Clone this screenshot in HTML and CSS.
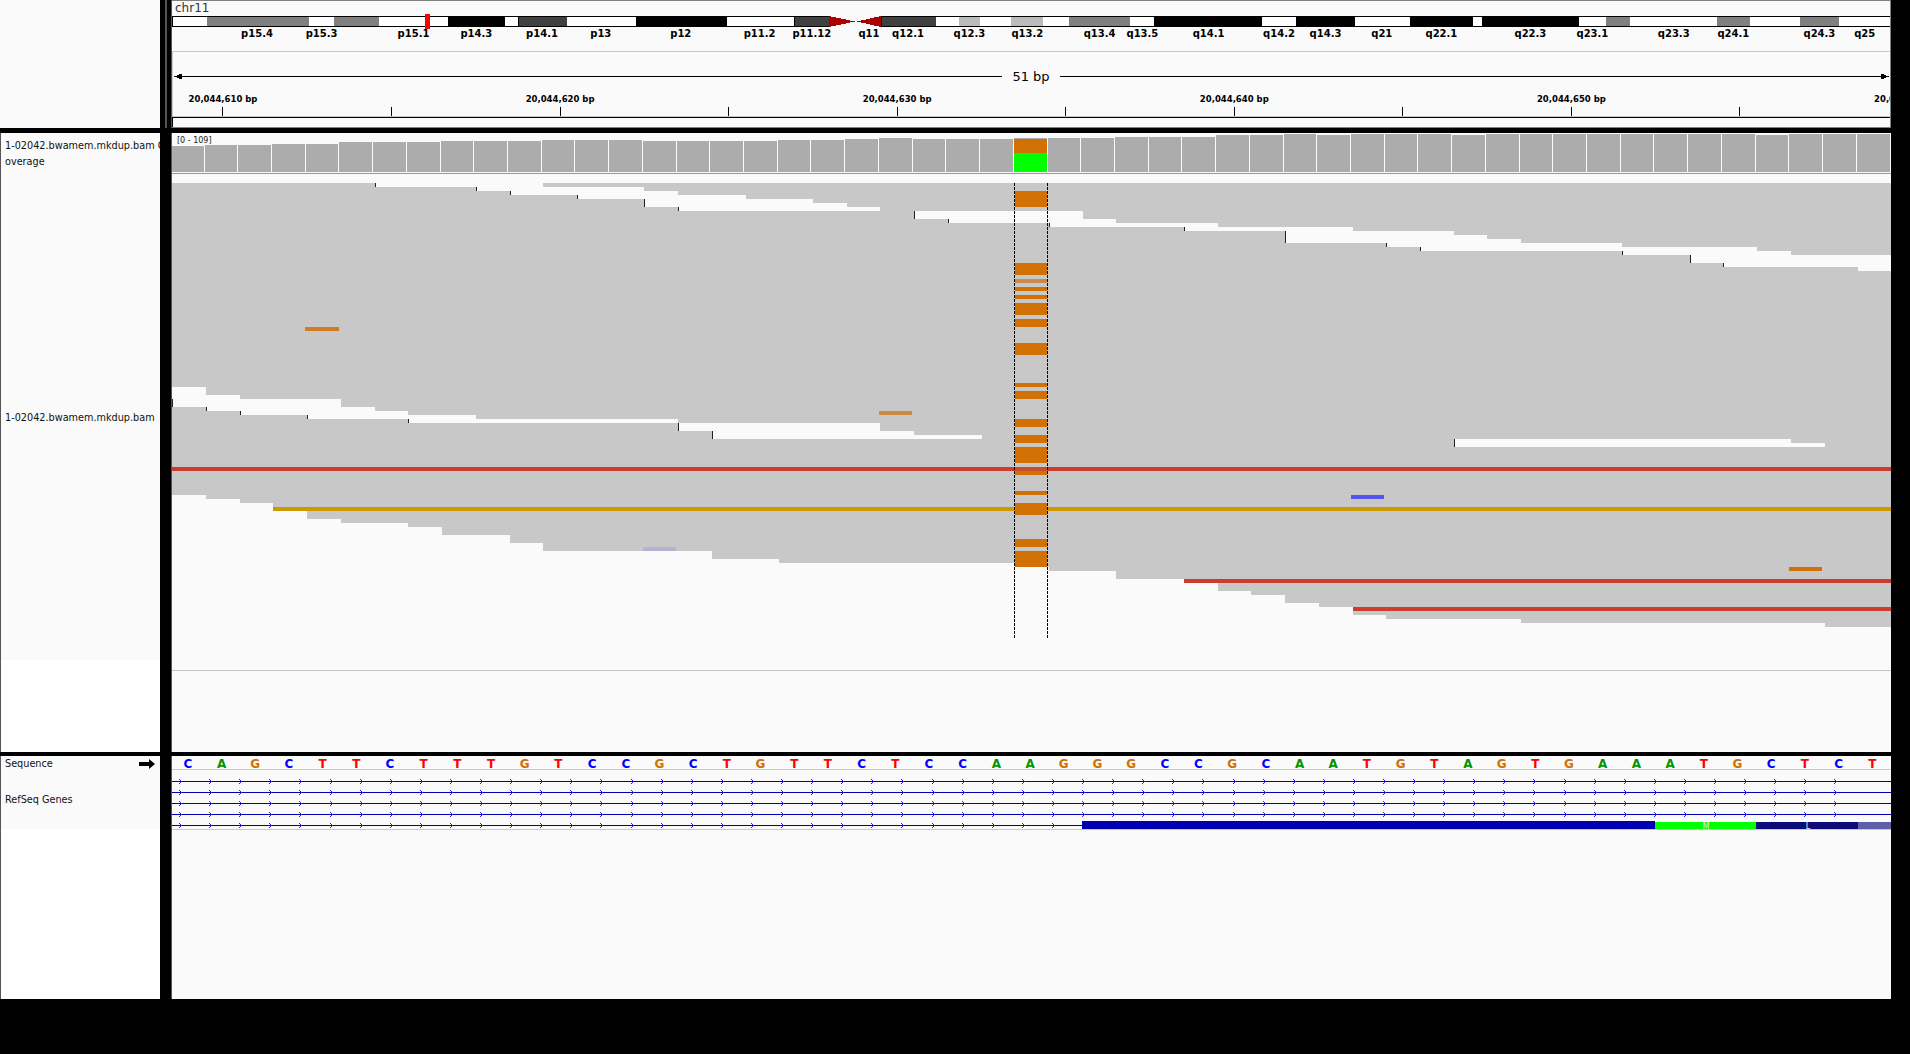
FILE: index.html
```html
<!DOCTYPE html>
<html lang="en">
<head>
  <meta charset="UTF-8" />
  <title>IGV</title>
  <link rel="stylesheet" href="styles.css">
</head>
<body>

  <div class="igv">
    <!-- header: ideogram + ruler -->
    <div class="names names-header"></div>
    <div class="gutter gutter-header"></div>
    <div class="data data-header">
      <div class="chr-name">chr11</div>
      <svg id="header" class="canvas" viewBox="172 0 1719 128" width="1719" height="128"></svg>
    </div>
    <div class="spacer"></div>

    <div class="sep"></div>

    <!-- alignments -->
    <div class="names names-bam">
      <div class="bam-top">
        <div class="track-label cov-label">1-02042.bwamem.mkdup.bam Coverage</div>
        <div class="track-label bam-label">1-02042.bwamem.mkdup.bam</div>
      </div>
    </div>
    <div class="gutter"></div>
    <div class="data data-bam">
      <div class="range">[0 - 109]</div>
      <svg id="bam" class="canvas" viewBox="172 133 1719 619" width="1719" height="619"></svg>
    </div>
    <div class="spacer"></div>

    <div class="sep sep-low"></div>

    <!-- sequence + genes -->
    <div class="names names-feat">
      <div class="feat-top">
        <div class="seq-row">
          <span class="track-label">Sequence</span>
          <svg class="strand" width="16" height="10" viewBox="0 0 16 10"><path d="M0 3h10V0l6 5-6 5V7H0z"/></svg>
        </div>
        <div class="track-label gene-label">RefSeq Genes</div>
      </div>
    </div>
    <div class="gutter"></div>
    <div class="data data-feat">
      <div id="sequence" class="sequence"></div>
      <svg id="genes" class="canvas" viewBox="172 770 1719 60" width="1719" height="60"></svg>
    </div>
    <div class="spacer"></div>
  </div>

  <script src="script.js"></script>
</body>
</html>
```

FILE: styles.css
```css
html, body {
  margin: 0;
  height: 100%;
  background: #000;
  overflow: hidden;
}

body {
  font-family: "DejaVu Sans", sans-serif;
}

.igv {
  display: grid;
  grid-template-columns: 160px 12px 1719px 19px;
  grid-template-rows: 128px 5px 619px 4px 243px;
}

.sep {
  grid-column: 1 / -1;
  background: #000;
}

.names {
  background: #fff;
  overflow: hidden;
  box-sizing: border-box;
  border-left: 1px solid #555;
}

.names-header {
  background: #fafafa;
  border-left: 0;
}

.gutter {
  background: #000;
  box-shadow: inset -1px 0 #555;
}

.gutter-header {
  background: linear-gradient(#000, #000) 0 0 / 5px 100% no-repeat,
              linear-gradient(#000, #000) 7px 0 / 5px 100% no-repeat,
              #555;
}

.data {
  position: relative;
  background: #fafafa;
  overflow: hidden;
}

.canvas {
  display: block;
  shape-rendering: crispEdges;
}

.chr-name {
  position: absolute;
  left: 3px;
  top: 1px;
  font-size: 12px;
  line-height: 14px;
  color: #333;
}

.range {
  position: absolute;
  left: 5px;
  top: 3px;
  font-size: 8px;
  line-height: 10px;
  color: #222;
}

.track-label {
  font-size: 9.7px;
  line-height: 16px;
  color: #111;
  padding-left: 4px;
}

.cov-label {
  width: 160px;
  word-break: break-all;
  margin-top: 5px;
}

.bam-top {
  height: 527px;
  background: #fafafa;
  overflow: hidden;
}

.bam-label {
  margin-top: 240px;
}

.feat-top {
  height: 73px;
  background: #fafafa;
  overflow: hidden;
}

.seq-row {
  display: flex;
  align-items: center;
  justify-content: space-between;
  padding: 0 5px 0 0;
  height: 16px;
}

.strand {
  fill: #000;
}

.gene-label {
  margin-top: 20px;
}

/* svg text */
.cyto-label {
  font: bold 10px "DejaVu Sans", sans-serif;
  text-anchor: middle;
  fill: #000;
}

.tick-label {
  font: bold 8.5px "DejaVu Sans", sans-serif;
  text-anchor: middle;
  fill: #000;
}

.span-label {
  font: 13px "DejaVu Sans", sans-serif;
  text-anchor: middle;
  fill: #000;
}

.exon-label {
  font: 8px "DejaVu Sans", sans-serif;
  text-anchor: middle;
  fill: #e8e8e8;
}

/* reference bases */
.sequence {
  display: flex;
  height: 13px;
  margin-left: -1px;
  border-bottom: 1px solid #c8c8d0;
  padding-right: 2px;
}

.base {
  flex: 1 1 0;
  text-align: center;
  font-size: 12px;
  font-weight: bold;
  line-height: 16px;
}

.base-A { color: #009600; }
.base-C { color: #0000ff; }
.base-G { color: #d17105; }
.base-T { color: #ff0000; }
```

FILE: script.js
```js
const NS = 'http://www.w3.org/2000/svg';
const BP = 33.72;
const X0 = 172;
const RIGHT = 1891;

function rect(svg, x, y, x2, y2, fill) {
  const r = document.createElementNS(NS, 'rect');
  r.setAttribute('x', x);
  r.setAttribute('y', y);
  r.setAttribute('width', x2 - x);
  r.setAttribute('height', y2 - y);
  r.setAttribute('fill', fill);
  svg.appendChild(r);
}

function poly(svg, points, fill) {
  const p = document.createElementNS(NS, 'polygon');
  p.setAttribute('points', points);
  p.setAttribute('fill', fill);
  svg.appendChild(p);
}

function text(svg, x, y, str, cls) {
  const t = document.createElementNS(NS, 'text');
  t.setAttribute('x', x);
  t.setAttribute('y', y);
  t.setAttribute('class', cls);
  t.textContent = str;
  svg.appendChild(t);
}

const readX = (k) => Math.min(RIGHT, Math.round(172.3 + BP * k));
const covX = (k) => Math.round(170.8 + BP * k);

/* ---------- ideogram + ruler ---------- */
const header = document.getElementById('header');

const W = '#fff', G = '#808080', K = '#000', D = '#404040', L = '#bbb';
const bands = [
  [172.6, W], [207.3, G], [308.6, W], [333.5, G], [378.8, W], [448.2, K], [504.9, W],
  [518.4, D], [566.5, W], [635.5, K], [727, W], [793.5, D], [829.4, null], [881.2, D],
  [935.5, W], [958.8, L], [979.6, W], [1011.4, L], [1043.3, W], [1068.6, G], [1130.2, W],
  [1153.9, K], [1262.4, W], [1296, K], [1354.5, W], [1410, K], [1472.9, W], [1481.8, K],
  [1579, W], [1605.5, G], [1630.4, W], [1716.5, G], [1750.4, W], [1800.2, G], [1838.6, W],
  [1891, null]
];

const cytoLabels = [
  ['p15.4', 257], ['p15.3', 321.6], ['p15.1', 413.5], ['p14.3', 476.3], ['p14.1', 542],
  ['p13', 600.8], ['p12', 680.8], ['p11.2', 759.6], ['p11.12', 811.8], ['q11', 869],
  ['q12.1', 908], ['q12.3', 969.4], ['q13.2', 1027.3], ['q13.4', 1099.6], ['q13.5', 1142.4],
  ['q14.1', 1208.6], ['q14.2', 1279], ['q14.3', 1325.5], ['q21', 1381.8], ['q22.1', 1441.4],
  ['q22.3', 1530.4], ['q23.1', 1592.4], ['q23.3', 1673.7], ['q24.1', 1733.3], ['q24.3', 1819.4],
  ['q25', 1864.7]
];

rect(header, 172, 0, RIGHT, 1, '#808080');
rect(header, 173, 16, 829, 17, '#000');
rect(header, 173, 26, 829, 27, '#000');
rect(header, 881, 16, RIGHT, 17, '#000');
rect(header, 881, 26, RIGHT, 27, '#000');
rect(header, 172, 16, 173, 27, '#000');

for (let i = 0; i < bands.length - 1; i++) {
  const [x, fill] = bands[i];
  if (!fill) continue;
  const x1 = Math.round(x), x2 = Math.round(bands[i + 1][0]);
  rect(header, x1, 17, x2, 26, fill);
  if (fill === D) {
    rect(header, x1, 17, x1 + 1, 26, '#000');
  }
}

/* centromere */
poly(header, '829,16 855,21.5 829,27', '#aa0000');
poly(header, '881,16 857,21.5 881,27', '#aa0000');
rect(header, 425, 14, 430, 29, '#ff0000');

cytoLabels.forEach(([name, x]) => text(header, x, 37, name, 'cyto-label'));

/* ruler */
rect(header, 172, 51, RIGHT, 52, '#c8c8d0');
rect(header, 172, 51, 173, 116, '#c8c8d0');
rect(header, 176, 76, 1002, 77, '#000');
rect(header, 1060, 76, 1885, 77, '#000');
poly(header, '174,76.5 182,73.5 182,79.5', '#000');
poly(header, '1889,76.5 1881,73.5 1881,79.5', '#000');
text(header, 1031, 81, '51 bp', 'span-label');

for (let i = 0; i < 10; i++) {
  const x = Math.round(222.4 + 168.55 * i);
  rect(header, x, 107, x + 1, 116, '#000');
}
[0, 1, 2, 3, 4, 5].forEach((i) => {
  const pos = 20044610 + i * 10;
  const label = pos.toLocaleString('en-US') + ' bp';
  text(header, 223 + 337.1 * i, 102, label, 'tick-label');
});

rect(header, 172, 116, RIGHT, 117, '#c8c8d0');
rect(header, 172, 117, RIGHT, 118, '#000');
rect(header, 172, 117, 173, 127, '#000');
rect(header, 172, 127, RIGHT, 128, '#808080');
rect(header, 1890, 0, RIGHT, 128, '#808080');

/* ---------- coverage ---------- */
const bam = document.getElementById('bam');

const covTops = [
  146, 145, 145, 144, 144, 142, 142, 142, 141, 141, 141, 140, 140, 140, 141, 141, 141,
  141, 140, 140, 139, 138, 139, 139, 139, 138, 138, 138, 137, 137, 137, 135, 135, 134,
  134, 134, 134, 134, 134, 134, 134, 134, 134, 134, 134, 134, 134, 134, 134, 134, 134
];
const covOutlined = [34, 38, 47];

covTops.forEach((top, k) => {
  const x1 = Math.max(X0, covX(k));
  const x2 = Math.min(RIGHT, covX(k + 1) - 1);
  rect(bam, x1, top, x2, 172, '#acacac');
  if (covOutlined.includes(k)) {
    rect(bam, x1, 134, x2, 135, '#fafafa');
  }
  if (k === 25) {
    rect(bam, x1, top + 1, x2, 153, '#d17105');
    rect(bam, x1, 153, x2, 172, '#00ff00');
  }
});
rect(bam, X0, 173, RIGHT, 174, '#999');

/* ---------- alignments ---------- */
// bottom of the grey pile per base
const pileBottom = [
  495, 499, 503, 511, 519, 523, 523, 527, 535, 535, 543, 551, 551, 551, 551, 551, 559, 559,
  563, 563, 563, 563, 563, 563, 563, 567, 571, 571, 579, 579, 583, 591, 595, 603, 607, 615,
  619, 619, 619, 619, 623, 623, 623, 623, 623, 623, 623, 623, 623, 627, 627
];
pileBottom.forEach((bottom, k) => {
  rect(bam, readX(k), 183, readX(k + 1), bottom, '#c8c8c8');
});

// white gaps between reads: [from, to, top, bottom] in bases
const gaps = [
  [6, 9, 183, 187], [9, 10, 183, 191], [10, 11, 183, 195], [11, 12, 187, 195], [12, 14, 187, 199],
  [14, 15, 191, 207], [15, 17, 195, 211], [17, 19, 199, 211], [19, 20, 203, 211], [20, 21, 207, 211],
  [22, 23, 211, 219], [23, 26, 211, 223], [26, 27, 211, 227], [27, 28, 219, 227], [28, 30, 223, 227],
  [30, 31, 223, 231], [31, 33, 227, 231], [33, 35, 227, 243], [35, 36, 231, 243], [36, 37, 231, 247],
  [37, 38, 231, 251], [38, 39, 235, 251], [39, 40, 239, 251], [40, 43, 243, 251], [43, 45, 247, 255],
  [45, 46, 247, 263], [46, 47, 247, 267], [47, 48, 251, 267], [48, 50, 255, 267], [50, 51, 255, 271],
  [0, 1, 387, 407], [1, 2, 395, 411], [2, 4, 399, 415], [4, 5, 399, 419], [5, 6, 407, 419],
  [6, 7, 411, 419], [7, 9, 415, 423], [9, 15, 419, 423], [15, 16, 423, 431], [16, 21, 423, 439],
  [21, 22, 431, 439], [22, 24, 435, 439],
  [38, 48, 439, 447], [48, 49, 443, 447]
];
gaps.forEach(([a, b, top, bottom]) => {
  rect(bam, readX(a), top, readX(b), bottom, '#fafafa');
});

// soft clip ticks where a gap deepens
const clips = [
  [6, 183, 187], [9, 187, 191], [10, 191, 195], [12, 195, 199], [14, 199, 207], [15, 207, 211],
  [22, 211, 219], [23, 219, 223], [26, 223, 227], [30, 227, 231], [33, 231, 243], [36, 243, 247],
  [37, 247, 251], [43, 251, 255], [45, 255, 263], [46, 263, 267],
  [0, 399, 407], [1, 407, 411], [2, 411, 415], [4, 415, 419], [7, 419, 423], [15, 423, 431], [16, 431, 439],
  [38, 439, 447]
];
clips.forEach(([k, top, bottom]) => {
  rect(bam, readX(k), top, readX(k) + 1, bottom, '#222');
});

// single base mismatches
rect(bam, 305, 327, 339, 331, '#cf7c25');
rect(bam, 879, 411, 912, 415, '#cd8a40');
rect(bam, 643, 547, 676, 551, '#b4b4d2');
rect(bam, 1351, 495, 1384, 499, '#5555ee');
rect(bam, 1789, 567, 1822, 571, '#d17105');

// long mismatched pairs
rect(bam, X0, 467, RIGHT, 471, '#cc3d30');
rect(bam, readX(3), 507, RIGHT, 511, '#cc9900');
rect(bam, readX(30), 579, RIGHT, 583, '#cc3d30');
rect(bam, readX(35), 607, RIGHT, 611, '#cc3d30');

// the mismatch column
const orange = [
  [191, 207], [263, 275], [287, 291], [295, 299], [303, 315], [319, 327], [343, 355],
  [383, 387], [391, 399], [419, 427], [435, 443], [447, 463], [471, 475], [491, 495],
  [503, 515], [539, 547], [551, 567]
];
orange.forEach(([top, bottom]) => rect(bam, 1015, top, 1047, bottom, '#d17105'));
rect(bam, 1015, 279, 1047, 283, '#c98a4a');
rect(bam, 1015, 467, 1047, 471, '#c94f2c');

// centre-line markers, drawn dashed
[1014, 1047].forEach((x) => {
  for (let y = 183; y < 636; y += 4) {
    rect(bam, x, y, x + 1, y + 3, '#000');
  }
});

rect(bam, X0, 670, RIGHT, 671, '#c4c4c4');

/* ---------- sequence ---------- */
const sequence = document.getElementById('sequence');
'CAGCTTCTTTGTCCGCTGTTCTCCAAGGGCCGCAATGTAGTGAAATGCTCT'.split('').forEach((b) => {
  const span = document.createElement('span');
  span.className = 'base base-' + b;
  span.textContent = b;
  sequence.appendChild(span);
});

/* ---------- genes ---------- */
const genes = document.getElementById('genes');
[781, 792, 803, 814, 825].forEach((y, row) => {
  const end = row === 4 ? 1082 : RIGHT;
  rect(genes, X0, y, end, y + 1, '#0000b2');
  for (let x = 179; x < Math.min(end, 1862); x += 30.1) {
    const px = Math.round(x);
    rect(genes, px, y - 2, px + 1, y - 1, '#2222ff');
    rect(genes, px + 1, y - 1, px + 2, y, '#2222ff');
    rect(genes, px + 2, y, px + 3, y + 1, '#2222ff');
    rect(genes, px + 1, y + 1, px + 2, y + 2, '#2222ff');
    rect(genes, px, y + 2, px + 1, y + 3, '#2222ff');
  }
});
rect(genes, 1082, 821, 1655, 829, '#0000b2');
rect(genes, 1655, 822, 1756, 829, '#00ff00');
rect(genes, 1756, 822, 1858, 829, '#0c0c78');
rect(genes, 1858, 822, RIGHT, 829, '#5f5fa8');
text(genes, 1706, 829, 'M', 'exon-label');
text(genes, 1808, 829, 'L', 'exon-label');
rect(genes, X0, 829, RIGHT, 830, '#c8c8d0');
```
